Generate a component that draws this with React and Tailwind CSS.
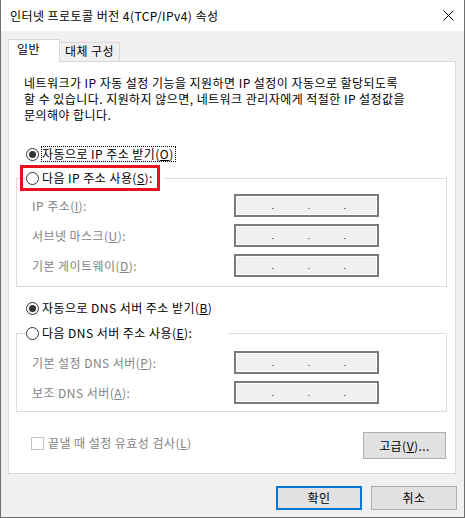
import { useState } from "react";

const font = { fontFamily: '"Malgun Gothic", "Noto Sans CJK KR", "Noto Sans", sans-serif' };

function Radio({ checked }) {
  return (
    <div className="w-[13px] h-[13px] rounded-full border border-[#333333] bg-white flex items-center justify-center shrink-0">
      {checked && <div className="w-[7px] h-[7px] rounded-full bg-[#333333]" />}
    </div>
  );
}

function IpField() {
  return (
    <div className="w-[145px] h-[23px] border-2 border-[#7a7a7a] bg-[#f0f0f0] shadow-[inset_0_0_0_1px_#ffffff] flex items-start pt-[12px] pl-[36px] gap-[34px]">
      <div className="w-[2px] h-px bg-[#7f7f9f]" />
      <div className="w-[2px] h-px bg-[#9f8f6f]" />
      <div className="w-[2px] h-px bg-[#7f7f9f]" />
    </div>
  );
}

function FieldRow({ label }) {
  return (
    <div className="flex items-center h-[23px]">
      <div className="w-[202px] text-[#838383] leading-[16px]">{label}</div>
      <IpField />
    </div>
  );
}

export default function App() {
  const [mode] = useState("auto");

  return (
    <div
      className="w-[465px] h-[518px] bg-[#f0f0f0] border-x border-b border-[#6f6f6f] text-[12px] tracking-[0.45px] text-black overflow-hidden"
      style={font}
    >
      {/* title bar */}
      <div className="h-[31px] bg-white flex items-center justify-between pl-[9px] pr-[10px]">
        <span className="leading-[16px]">인터넷 프로토콜 버전 4(TCP/IPv4) 속성</span>
        <svg width="11" height="11" viewBox="0 0 11 11">
          <path d="M0.5 0.5 L10.5 10.5 M10.5 0.5 L0.5 10.5" stroke="#000" strokeWidth="1" />
        </svg>
      </div>

      <div className="pl-[7px] pr-[7px] pt-[8px]">
        {/* tabs */}
        <div className="flex items-start h-[22px]">
          <div className="relative z-10 w-[52px] h-[23px] bg-white border-x border-t border-[#d9d9d9] pl-[8px] pt-[1px] leading-[16px]">
            일반
          </div>
          <div className="mt-[3px] w-[60px] h-[19px] bg-[#f0f0f0] border-t border-r border-[#d9d9d9] pl-[5px] leading-[16px] whitespace-nowrap">
            대체 구성
          </div>
        </div>

        {/* panel */}
        <div className="w-[448px] h-[413px] bg-white border border-[#d9d9d9] flex flex-col">
          <p className="pt-[13px] pl-[15px] leading-[16px] whitespace-nowrap">
            네트워크가 IP 자동 설정 기능을 지원하면 IP 설정이 자동으로 할당되도록
            <br />
            할 수 있습니다. 지원하지 않으면, 네트워크 관리자에게 적절한 IP 설정값을
            <br />
            문의해야 합니다.
          </p>

          <div className="mt-[23px] pl-[17px] flex items-center gap-[2px] h-[16px]">
            <Radio checked={mode === "auto"} />
            <span className="border border-dotted border-black leading-[14px] pr-[1px]">
              자동으로 IP 주소 받기(<u>O</u>)
            </span>
          </div>

          <fieldset className="mt-[8px] ml-[7px] w-[431px] border border-[#dcdcdc] pb-[9px]">
            <legend className="relative ml-[9px] w-[138px] h-[16px]">
              <div className="flex items-center gap-[2px] h-[16px] whitespace-nowrap">
                <Radio checked={mode === "manual"} />
                <span className="border border-transparent leading-[14px]">
                  다음 IP 주소 사용(<u>S</u>):
                </span>
              </div>
              <div className="absolute left-[-6px] top-[-5px] w-[140px] h-[26px] border-[3px] border-[#e8121c]" />
            </legend>
            <div className="pt-[8px] pl-[15px] flex flex-col gap-[7px]">
              <FieldRow label={<>IP 주소(<u>I</u>):</>} />
              <FieldRow label={<>서브넷 마스크(<u>U</u>):</>} />
              <FieldRow label={<>기본 게이트웨이(<u>D</u>):</>} />
            </div>
          </fieldset>

          <div className="mt-[13px] pl-[17px] flex items-center gap-[2px] h-[16px]">
            <Radio checked />
            <span className="border border-transparent leading-[14px]">
              자동으로 DNS 서버 주소 받기(<u>B</u>)
            </span>
          </div>

          <fieldset className="mt-[9px] ml-[7px] w-[431px] border border-[#dcdcdc] pb-[7px]">
            <legend className="ml-[9px] w-[202px] h-[16px]">
              <div className="flex items-center gap-[2px] h-[16px] whitespace-nowrap">
                <Radio />
                <span className="border border-transparent leading-[14px]">
                  다음 DNS 서버 주소 사용(<u>E</u>):
                </span>
              </div>
            </legend>
            <div className="pt-[10px] pl-[15px] flex flex-col gap-[7px]">
              <FieldRow label={<>기본 설정 DNS 서버(<u>P</u>):</>} />
              <FieldRow label={<>보조 DNS 서버(<u>A</u>):</>} />
            </div>
          </fieldset>

          <div className="mt-[20px] pl-[22px] pr-[9px] flex items-start justify-between">
            <div className="mt-[3px] flex items-center gap-[4px]">
              <div className="w-[13px] h-[13px] border border-[#c4c4c4] bg-white" />
              <span className="text-[#838383] leading-[16px]">
                끝낼 때 설정 유효성 검사(<u>L</u>)
              </span>
            </div>
            <button className="w-[83px] h-[27px] bg-[#e1e1e1] border border-[#adadad] leading-[16px]">
              고급(<u>V</u>)...
            </button>
          </div>
        </div>

        {/* dialog buttons */}
        <div className="mt-[12px] flex justify-end gap-[9px]">
          <button className="w-[86px] h-[24px] bg-[#e1e1e1] border-2 border-[#0078d7] leading-[16px]">
            확인
          </button>
          <button className="w-[86px] h-[24px] bg-[#e1e1e1] border border-[#adadad] leading-[16px]">
            취소
          </button>
        </div>
      </div>
    </div>
  );
}
